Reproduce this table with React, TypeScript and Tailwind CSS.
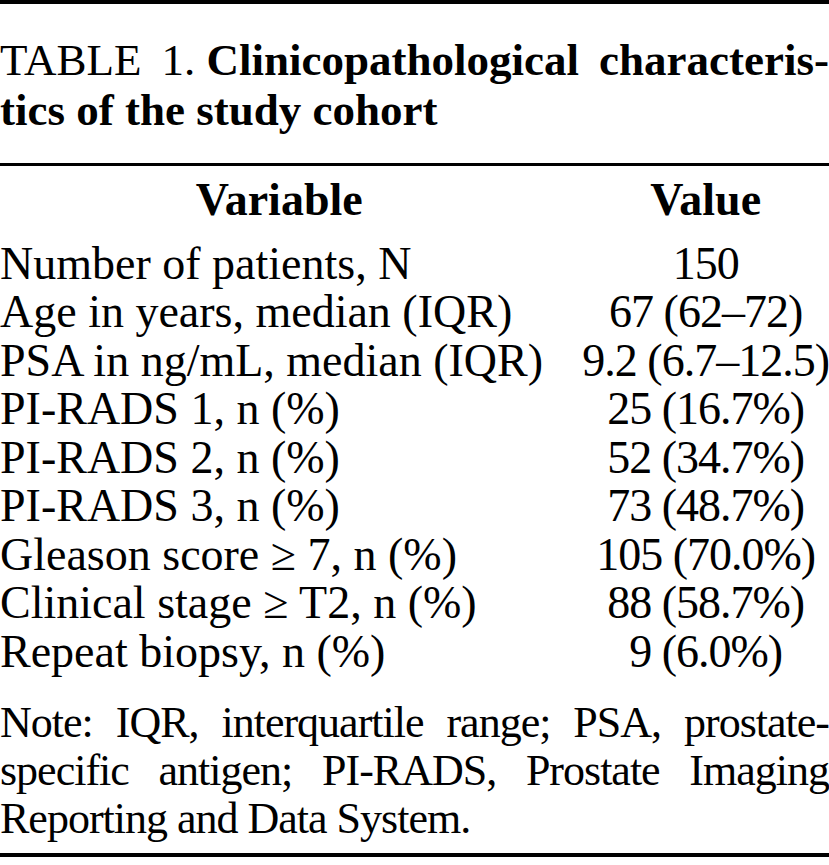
import React from 'react';

const rows: [string, string][] = [
  ['Number of patients, N', '150'],
  ['Age in years, median (IQR)', '67 (62–72)'],
  ['PSA in ng/mL, median (IQR)', '9.2 (6.7–12.5)'],
  ['PI-RADS 1, n (%)', '25 (16.7%)'],
  ['PI-RADS 2, n (%)', '52 (34.7%)'],
  ['PI-RADS 3, n (%)', '73 (48.7%)'],
  ['Gleason score ≥ 7, n (%)', '105 (70.0%)'],
  ['Clinical stage ≥ T2, n (%)', '88 (58.7%)'],
  ['Repeat biopsy, n (%)', '9 (6.0%)'],
];

export default function App() {
  return (
    <div className="w-[829px] h-[865px] bg-white text-black font-['Liberation_Serif',serif] text-[46px] leading-[48px] overflow-hidden">
      {/* top rule */}
      <div className="h-[4px] bg-black" />

      {/* caption */}
      <div className="pt-[31px] leading-[50px] text-[45px]">
        <div className="flex justify-between whitespace-nowrap">
          <span>TABLE</span>
          <span>
            1. <span className="font-bold">Clinicopathological</span>
          </span>
          <span className="font-bold">characteris-</span>
        </div>
        <p className="font-bold">tics of the study cohort</p>
      </div>

      <div className="mt-[28px] h-[3px] bg-black" />

      {/* table */}
      <div className="grid grid-cols-[1fr_max-content] mt-[10px] leading-[48.5px]">
        <div className="text-center font-bold pb-[15px] pr-[24px]">Variable</div>
        <div className="text-center font-bold pb-[15px]">Value</div>
        {rows.map(([label, value], i) => (
          <React.Fragment key={i}>
            <div className="whitespace-nowrap">{label}</div>
            <div className="text-center whitespace-nowrap tracking-[-1px]">{value}</div>
          </React.Fragment>
        ))}
      </div>

      {/* note */}
      <div className="mt-[23px] text-[44px] tracking-[-1px]">
        <p className="text-justify [text-align-last:justify]">Note: IQR, interquartile range; PSA, prostate-</p>
        <p className="text-justify [text-align-last:justify]">specific antigen; PI-RADS, Prostate Imaging</p>
        <p>Reporting and Data System.</p>
      </div>

      <div className="mt-[10px] h-[4px] bg-black" />
    </div>
  );
}
